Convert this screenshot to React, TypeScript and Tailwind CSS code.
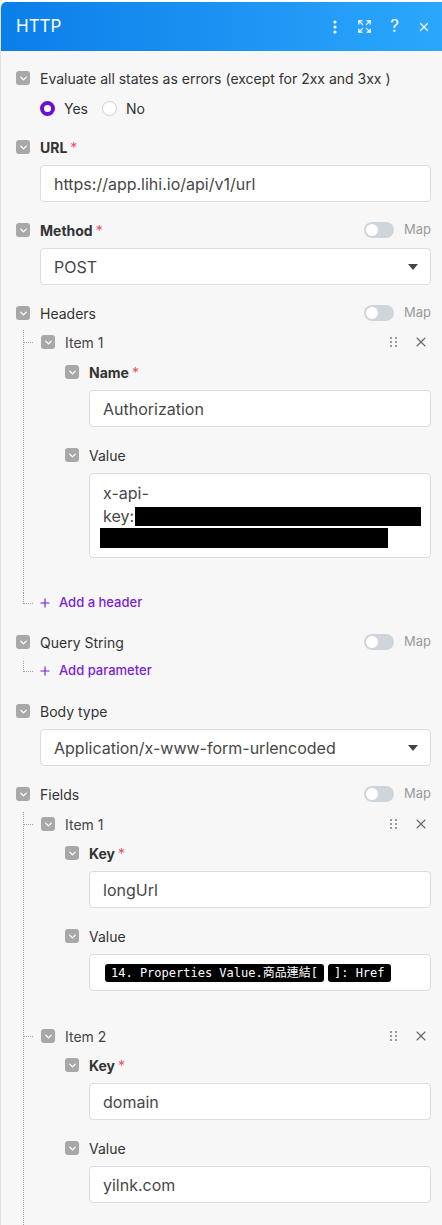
import { ChevronDown, Expand, X, Plus } from "lucide-react";
import type { ReactNode } from "react";

const font = { fontFamily: "Inter, 'Noto Sans CJK TC', sans-serif" };

function Chk() {
  return (
    <span className="flex h-[14px] w-[14px] shrink-0 items-center justify-center rounded-[3px] bg-[#a8a8a8]">
      <ChevronDown size={11} color="white" strokeWidth={3} />
    </span>
  );
}

function MapToggle() {
  return (
    <div className="ml-auto flex items-center">
      <span className="flex h-4 w-[30px] items-center rounded-full bg-[#d0d5dc] px-[2px]">
        <span className="h-3 w-3 rounded-full bg-white" />
      </span>
      <span className="ml-[10px] text-[13px] text-[#9a9a9a]">Map</span>
    </div>
  );
}

function Label({ text, bold, req, map }: { text: string; bold?: boolean; req?: boolean; map?: boolean }) {
  return (
    <div className="flex h-5 items-center">
      <Chk />
      <span className={`ml-[10px] text-[14px] text-[#333] ${bold ? "font-bold" : ""}`}>{text}</span>
      {req && <span className="ml-[3px] text-[14px] text-[#e5546a]">*</span>}
      {map && <MapToggle />}
    </div>
  );
}

function Input({ children, select }: { children: ReactNode; select?: boolean }) {
  return (
    <div className="ml-[24px] mt-2 flex h-[37px] items-center rounded-[4px] border border-[#dcdcdc] bg-white pl-[13px] pr-[12px] text-[16px] text-[#474747]">
      <span className="truncate">{children}</span>
      {select && (
        <svg className="ml-auto" width="10" height="6" viewBox="0 0 10 6">
          <path d="M0 0h10L5 6z" fill="#444" />
        </svg>
      )}
    </div>
  );
}

function Grip() {
  return (
    <svg width="8" height="11" viewBox="0 0 8 11" fill="#9a9a9a">
      <rect x="0" y="0" width="2" height="2" />
      <rect x="5" y="0" width="2" height="2" />
      <rect x="0" y="4" width="2" height="2" />
      <rect x="5" y="4" width="2" height="2" />
      <rect x="0" y="8" width="2" height="2" />
      <rect x="5" y="8" width="2" height="2" />
    </svg>
  );
}

function ItemRow({ text }: { text: string }) {
  return (
    <div className="flex h-5 items-center pr-[2px]">
      <span className="w-[9px] border-t border-dotted border-[#a0a0a0]" />
      <span className="ml-[8px]">
        <Chk />
      </span>
      <span className="ml-[10px] text-[14px] text-[#444]">{text}</span>
      <span className="ml-auto mr-[15px]">
        <Grip />
      </span>
      <X size={16} color="#666" strokeWidth={1.6} />
    </div>
  );
}

function AddRow({ text }: { text: string }) {
  return (
    <div className="ml-[7px] flex h-5 items-center">
      <span className="h-[11px] w-[10px] self-start border-b border-l border-dotted border-[#a0a0a0]" />
      <Plus size={14} strokeWidth={2} className="ml-[5px] text-[#7b1fd6]" />
      <span className="ml-[7px] text-[13px] font-medium text-[#7b1fd6]">{text}</span>
    </div>
  );
}

function Chip({ children }: { children: ReactNode }) {
  return (
    <span
      className="mr-[4px] inline-flex h-[18px] items-center rounded-[3px] bg-black px-[6px] text-[12px] text-white"
      style={{ fontFamily: "'DejaVu Sans Mono', 'Noto Sans CJK TC', monospace" }}
    >
      {children}
    </span>
  );
}

export default function App() {
  return (
    <div className="bg-white pt-[2px]" style={font}>
      <div className="overflow-hidden rounded-tl-[6px] border-l border-[#e2e2e2] bg-[#f7f7f7]">
        <div className="flex h-[49px] items-center bg-gradient-to-r from-[#0a7ee8] to-[#2ba7fd] pl-[15px] pr-[11px] text-white">
          <span className="text-[17px]">HTTP</span>
          <div className="ml-auto flex items-center">
            <svg width="4" height="14" viewBox="0 0 4 14" fill="white">
              <circle cx="2" cy="2" r="1.6" />
              <circle cx="2" cy="7" r="1.6" />
              <circle cx="2" cy="12" r="1.6" />
            </svg>
            <Expand size={15} strokeWidth={2} className="ml-[20px]" />
            <span className="ml-[18px] text-[17px]">?</span>
            <X size={14} strokeWidth={2} className="ml-[18px]" />
          </div>
        </div>

        <div className="pb-0 pl-[15px] pr-[11px] pt-[17px]">
          <Label text="Evaluate all states as errors (except for 2xx and 3xx )" />
          <div className="ml-[24px] mt-[10px] flex h-5 items-center text-[14px] text-[#333]">
            <span className="h-[15px] w-[15px] rounded-full border-[4px] border-[#6c0fcf] bg-white" />
            <span className="ml-[9px]">Yes</span>
            <span className="ml-[14px] h-[15px] w-[15px] rounded-full border border-[#cfcfcf] bg-white" />
            <span className="ml-[9px]">No</span>
          </div>

          <div className="mt-[19px]">
            <Label text="URL" bold req />
            <Input>https://app.lihi.io/api/v1/url</Input>
          </div>

          <div className="mt-[18px]">
            <Label text="Method" bold req map />
            <Input select>POST</Input>
          </div>

          <div className="mt-[18px]">
            <Label text="Headers" map />
            <div className="ml-[7px] mt-[7px] border-l border-dotted border-[#a0a0a0] pb-[35px] pt-[2px]">
              <ItemRow text="Item 1" />
              <div className="pl-[41px]">
                <div className="mt-[10px]">
                  <Label text="Name" bold req />
                  <Input>Authorization</Input>
                </div>
                <div className="mt-[18px]">
                  <Label text="Value" />
                  <div className="ml-[24px] mt-2 h-[85px] rounded-[4px] border border-[#dcdcdc] bg-white pl-[13px] pt-[8px] text-[16px] leading-[23px] text-[#474747]">
                    <div>x-api-</div>
                    <div className="flex items-center">
                      key:
                      <span className="ml-[1px] inline-block h-[19px] w-[286px] bg-black" />
                    </div>
                    <div className="ml-[-3px] h-[20px] w-[288px] bg-black" />
                  </div>
                </div>
              </div>
            </div>
            <AddRow text="Add a header" />
          </div>

          <div className="mt-[19px]">
            <Label text="Query String" map />
            <div className="mt-[9px]">
              <AddRow text="Add parameter" />
            </div>
          </div>

          <div className="mt-[20px]">
            <Label text="Body type" />
            <Input select>Application/x-www-form-urlencoded</Input>
          </div>

          <div className="mt-[18px]">
            <Label text="Fields" map />
            <div className="ml-[7px] mt-[8px] border-l border-dotted border-[#a0a0a0] pb-[30px] pt-[2px]">
              <ItemRow text="Item 1" />
              <div className="pl-[41px]">
                <div className="mt-[9px]">
                  <Label text="Key" bold req />
                  <Input>longUrl</Input>
                </div>
                <div className="mt-[18px]">
                  <Label text="Value" />
                  <div className="ml-[24px] mt-2 flex h-[37px] items-center rounded-[4px] border border-[#dcdcdc] bg-white pl-[15px]">
                    <Chip>14. Properties Value.商品連結[</Chip>
                    <Chip>]: Href</Chip>
                  </div>
                </div>
              </div>

              <div className="mt-[35px]">
                <ItemRow text="Item 2" />
              </div>
              <div className="pl-[41px]">
                <div className="mt-[9px]">
                  <Label text="Key" bold req />
                  <Input>domain</Input>
                </div>
                <div className="mt-[18px]">
                  <Label text="Value" />
                  <Input>yilnk.com</Input>
                </div>
              </div>
            </div>
          </div>
        </div>
      </div>
    </div>
  );
}
